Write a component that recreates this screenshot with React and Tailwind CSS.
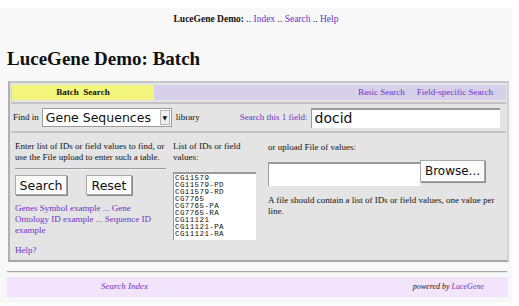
import React from 'react';

const serif = { fontFamily: '"Liberation Serif", "Times New Roman", serif' };
const sans = { fontFamily: '"DejaVu Sans", "Liberation Sans", sans-serif' };
const mono = { fontFamily: '"Liberation Mono", "Courier New", monospace' };

const ids = ['CG11579', 'CG11579-PD', 'CG11579-RD', 'CG7765', 'CG7765-PA', 'CG7765-RA', 'CG11121', 'CG11121-PA', 'CG11121-RA'];

const App = () => {
  return (
    <div className="w-[519px] h-[306px] bg-white pt-2 overflow-hidden text-[#111]" style={serif}>
      <div className="w-[512px] h-[295px] bg-[#f8f8f8] flex flex-col">
        {/* top nav */}
        <div className="text-center text-[9.5px] mt-[5px] h-[12px] leading-[12px]">
          <span className="font-bold">LuceGene Demo:</span>{' '}
          .. <a className="text-[#6a35c8]">Index</a> .. <a className="text-[#6a35c8]">Search</a> .. <a className="text-[#6a35c8]">Help</a>
        </div>

        <h1 className="text-[19px] font-bold ml-[7px] mt-[23px] leading-[22px]">LuceGene Demo: Batch</h1>

        {/* main box */}
        <div className="ml-[8px] mt-[11px] w-[501px] h-[181px] border-2 border-t-[#c6c6c6] border-l-[#b0b0b0] border-r-[#d2d2d2] border-b-[#a6a6a6] bg-[#e4e4e4] p-[1px] flex flex-col">
          <div className="flex h-[15px] mt-[1px] bg-[#d6d0ea] text-[9px] leading-[15px]">
            <div className="w-[142px] ml-[1px] bg-[#f3f57c] font-bold text-center">Batch&nbsp; Search</div>
            <div className="flex-1 flex justify-end gap-[12px] pr-[13px] text-[#6a35c8]">
              <a>Basic Search</a>
              <a>Field-specific Search</a>
            </div>
          </div>

          {/* find in row */}
          <div className="mt-[2px] border-t-2 border-[#c4c4c4] h-[29px] flex items-center text-[9px] pl-[2px]">
            <span>Find in</span>
            <div className="ml-[3px] w-[130px] h-[19px] bg-white border border-[#9a9a9a] flex items-center justify-between" style={sans}>
              <span className="text-[12.5px] pl-[3px] leading-[17px]">Gene Sequences</span>
              <span className="w-[10px] h-[15px] mr-[1px] bg-[#f0f0f0] border border-[#b5b5b5] flex items-center justify-center text-[6px]">▼</span>
            </div>
            <span className="ml-[4px]">library</span>
            <span className="ml-[40px] text-[#6a35c8]">Search this 1 field:</span>
            <div className="ml-[3px] w-[189px] h-[20px] bg-white border-t-2 border-l border-[#9a9a9a] text-[14px] leading-[17px] pl-[3px]" style={sans}>docid</div>
          </div>

          {/* content row */}
          <div className="border-t-2 border-[#c4c4c4] flex-1 flex text-[9px] leading-[11px] pt-[8px]">
            <div className="ml-[4px] w-[151px]">
              <p>Enter list of IDs or field values to find, or use the File upload to enter such a table.</p>
              <div className="mt-[5px] h-[2px] border-t border-[#9b9b9b] bg-[#f2f2f2]" />
              <div className="flex mt-[5px]" style={sans}>
                <button className="w-[52px] h-[20px] bg-[#fafafa] border border-[#a9a9a9] shadow-[1px_1px_0_#8a8a8a] text-[12.5px]">Search</button>
                <button className="ml-[19px] w-[46px] h-[20px] bg-[#fafafa] border border-[#a9a9a9] shadow-[1px_1px_0_#8a8a8a] text-[12.5px]">Reset</button>
              </div>
              <p className="mt-[8px] text-[#6a35c8] leading-[11px]">
                <a>Genes Symbol example</a> ... <a>Gene Ontology ID example</a> ... <a>Sequence ID example</a>
              </p>
              <p className="mt-[9px] text-[#6a35c8]">Help?</p>
            </div>
            <div className="ml-[7px] w-[84px]">
              <p>List of IDs or field values:</p>
              <div className="mt-[9px] w-[83px] h-[68px] bg-white border-t-2 border-l border-[#9a9a9a] pl-[1px] pt-[1px] text-[7.5px] leading-[7px] tracking-[0.4px] overflow-hidden" style={mono}>
                {ids.map((id) => (
                  <div key={id}>{id}</div>
                ))}
              </div>
            </div>
            <div className="ml-[11px] flex-1">
              <p className="mt-[1px]">or upload File of values:</p>
              <div className="flex items-start mt-[7px]">
                <div className="w-[152px] h-[24px] mt-[2px] bg-white border-t-2 border-l border-[#9a9a9a]" />
                <button className="w-[65px] h-[22px] bg-[#fafafa] border border-[#a9a9a9] shadow-[1px_1px_0_#8a8a8a] text-[12px]" style={sans}>Browse...</button>
              </div>
              <p className="mt-[9px] w-[236px]">A file should contain a list of IDs or field values, one value per line.</p>
            </div>
          </div>
        </div>

        {/* footer */}
        <div className="ml-[7px] mt-[9px] w-[500px] h-[2px] border-t border-[#a8a8a8] bg-[#e8e8e8]" />
        <div className="ml-[7px] mt-[4px] w-[501px] h-[20px] bg-[#f1e4fb] flex items-center text-[9px] italic">
          <a className="ml-[94px] text-[#6a35c8]">Search Index</a>
          <span className="ml-auto mr-[24px] text-[8px]">powered by <a className="text-[#6a35c8]">LuceGene</a></span>
        </div>
      </div>
    </div>
  );
};

export default App;
